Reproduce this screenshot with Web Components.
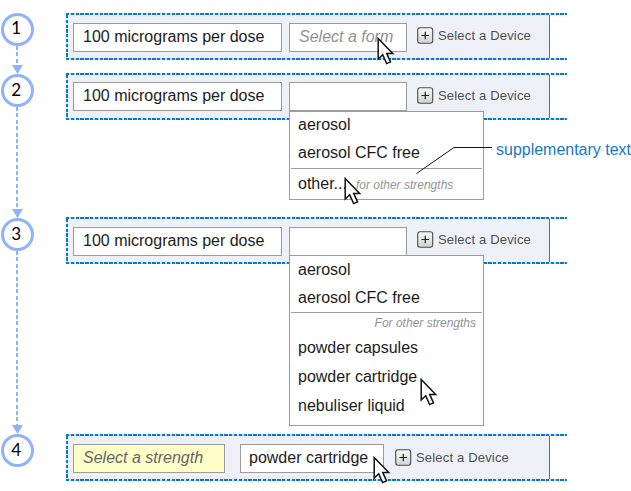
<!DOCTYPE html>
<html lang="en">
<head>
<meta charset="utf-8">
<title>Select a form</title>
<style>
body{margin:0;width:631px;height:491px;overflow:hidden;background:#fff;color:#1c1c1c;font-family:"Liberation Sans",Arial,sans-serif;font-size:16px}
main{display:grid;grid-template-columns:66px 1fr;position:relative;height:491px}
.rows{display:grid;grid-template-rows:60px 144px 217px 47px;padding-top:13px;align-content:start}
mouse-cursor,call-out{position:absolute}
</style>
</head>
<body>
<main>
  <step-rail></step-rail>
  <div class="rows">
    <field-strip style="--h:47px;--pad:10px">
      <text-field style="--w:209px">100 micrograms per dose</text-field>
      <text-field style="--w:118px;--gap:7px;--ink:#929292" hint>Select a form</text-field>
      <device-button></device-button>
    </field-strip>
    <field-strip style="--h:47px;--pad:9px">
      <text-field style="--w:209px">100 micrograms per dose</text-field>
      <text-field style="--w:118px;--gap:7px"><option-menu slot="menu" style="--mh:89px">
        <menu-option style="--oh:28px">aerosol</menu-option>
        <menu-option style="--oh:28px">aerosol CFC free</menu-option>
        <menu-rule></menu-rule>
        <menu-option style="--oh:32px">other...<small-note slot="note" style="margin:1px 0 0 9px">for other strengths</small-note></menu-option>
      </option-menu></text-field>
      <device-button style="--drop:5px"></device-button>
    </field-strip>
    <field-strip style="--h:47px;--pad:10px">
      <text-field style="--w:209px">100 micrograms per dose</text-field>
      <text-field style="--w:118px;--gap:7px"><option-menu slot="menu" style="--mh:171px;--top:27px;--ob:0px">
        <menu-option style="--oh:28px">aerosol</menu-option>
        <menu-option style="--oh:28px">aerosol CFC free</menu-option>
        <menu-rule></menu-rule>
        <small-note style="display:block;text-align:right;padding-right:7px;line-height:21px">For other strengths</small-note>
        <menu-option style="--oh:28px">powder capsules</menu-option>
        <menu-option style="--oh:30px">powder cartridge</menu-option>
        <menu-option style="--oh:27px">nebuliser liquid</menu-option>
      </option-menu></text-field>
      <device-button></device-button>
    </field-strip>
    <field-strip style="--h:47px;--pad:10px">
      <text-field style="--w:152px;--ink:#666;--bg:#ffffc8" hint>Select a strength</text-field>
      <text-field style="--w:144px;--gap:15px;--inset:8px">powder cartridge</text-field>
      <device-button style="--drop:5px;--lead:11px"></device-button>
    </field-strip>
  </div>
  <call-out style="left:416px;top:139px">supplementary text</call-out>
  <mouse-cursor style="left:377px;top:37px"></mouse-cursor>
  <mouse-cursor style="left:344px;top:177px"></mouse-cursor>
  <mouse-cursor style="left:420px;top:378px"></mouse-cursor>
  <mouse-cursor style="left:373px;top:456px"></mouse-cursor>
</main>
<script>
const define = (name, html) => {
  const t = document.createElement('template');
  t.innerHTML = html;
  customElements.define(name, class extends HTMLElement {
    constructor() {
      super();
      this.attachShadow({mode: 'open'}).append(t.content.cloneNode(true));
    }
  });
};

define('step-marker', `<style>
:host{display:flex;box-sizing:border-box;width:33px;height:33px;border:3px solid #8fb2fb;border-radius:50%;align-items:center;justify-content:center;font:17px/1 Lato,sans-serif;color:#000;flex:none;padding:0 2px 3px 0}
</style><slot></slot>`);

define('step-link', `<style>
:host{display:flex;flex-direction:column;align-items:center;width:33px;height:var(--len)}
i{flex:1;width:2px;background:repeating-linear-gradient(#8fb2fb 0 4px,transparent 4px 6.4px)}
svg{display:block;flex:none}
</style><i></i><svg width="11" height="9" viewBox="0 0 11 9"><path d="M0 0H11L5.5 9Z" fill="#8fb2fb"/></svg>`);

define('step-rail', `<style>
:host{display:flex;flex-direction:column;padding:12.5px 0 0 .8px}
</style>
<step-marker>1</step-marker><step-link style="--len:28.5px"></step-link>
<step-marker>2</step-marker><step-link style="--len:111px"></step-link>
<step-marker>3</step-marker><step-link style="--len:183px"></step-link>
<step-marker>4</step-marker>`);

define('field-strip', `<style>
:host{display:grid;grid-template:2px 1fr 2px / 2px 481px 1px 17px;width:501px;height:var(--h)}
.h{grid-column:1/5;background:repeating-linear-gradient(90deg,#0b78c8 0 3.3px,#b9dcf4 3.3px 4.8px)}
.v{background:repeating-linear-gradient(#0b78c8 0 3.3px,#d5e8f5 3.3px 4.8px)}
.body{display:flex;align-items:flex-start;box-sizing:border-box;padding:calc(var(--pad) - 2px) 0 0 5px;background:#edf0f6;min-height:0}
.end{background:#4677b0}
.bottom{grid-row:3}
</style><div class="h"></div><div class="v"></div><div class="body"><slot></slot></div><div class="end"></div><div class="h bottom"></div>`);

define('text-field', `<style>
:host{display:block;position:relative;box-sizing:border-box;flex:none;width:var(--w);height:29px;margin-left:var(--gap,0);border:1px solid #9c9c9c;background:var(--bg,#fff);color:var(--ink,inherit);line-height:26px;padding-left:var(--inset,9px);white-space:nowrap}
:host([hint]){font-style:italic}
</style><slot></slot><slot name="menu"></slot>`);

define('option-menu', `<style>
:host{display:block;position:absolute;z-index:1;left:-1px;top:var(--top,28px);box-sizing:border-box;width:195px;height:var(--mh);border:1px solid #9c9c9c;background:#fff;color:#1c1c1c}
</style><slot></slot>`);

define('menu-option', `<style>
:host{display:flex;box-sizing:border-box;align-items:center;height:var(--oh);padding:0 0 var(--ob,2px) 8px;line-height:20px}
</style><span><slot></slot></span><slot name="note"></slot>`);

define('menu-rule', `<style>:host{display:block;height:1px;margin:0 1px;background:#9c9c9c}</style>`);

define('small-note', `<style>:host{font:italic 12px "Liberation Sans",Arial,sans-serif;color:#929292}</style><slot></slot>`);

define('device-button', `<style>
:host{display:flex;align-items:center;margin:var(--drop,4px) 0 0 var(--lead,10px);height:17px;font-size:13px;letter-spacing:.18px;color:#505050;gap:4px}
svg{display:block}
</style><svg width="17" height="17" viewBox="0 0 17 17"><defs><linearGradient id="g" x2="0" y2="1"><stop offset=".1" stop-color="#f6f6f6"/><stop offset="1" stop-color="#d2d2d2"/></linearGradient></defs><rect x=".7" y=".7" width="15" height="15.6" rx="2.5" fill="url(#g)" stroke="#4c4c4c" stroke-width="1.1"/><path d="M4.5 8.5H12M8.25 4.7V12.3" stroke="#222" stroke-width="1.2"/></svg><span>Select a Device</span>`);

define('mouse-cursor', `<style>:host{display:block;z-index:3}svg{display:block}</style>
<svg width="18" height="29" viewBox="0 0 18 29"><path d="M1.2 1.5V22L5.7 17.8L9.6 26.6L13.5 24.9L9.7 16.4H15.7Z" fill="#fff" stroke="#111" stroke-width="1.5"/></svg>`);

define('call-out', `<style>
:host{display:flex;align-items:flex-start;z-index:2;color:#1878c2;white-space:nowrap;line-height:20px;gap:4px}
svg{display:block}
span{padding-top:1px;letter-spacing:-.01px}
</style><svg width="76" height="36" viewBox="0 0 76 36"><path d="M.5 34.5L38 8.5H76" fill="none" stroke="#111" stroke-width="1"/></svg><span><slot></slot></span>`);
</script>
</body>
</html>
